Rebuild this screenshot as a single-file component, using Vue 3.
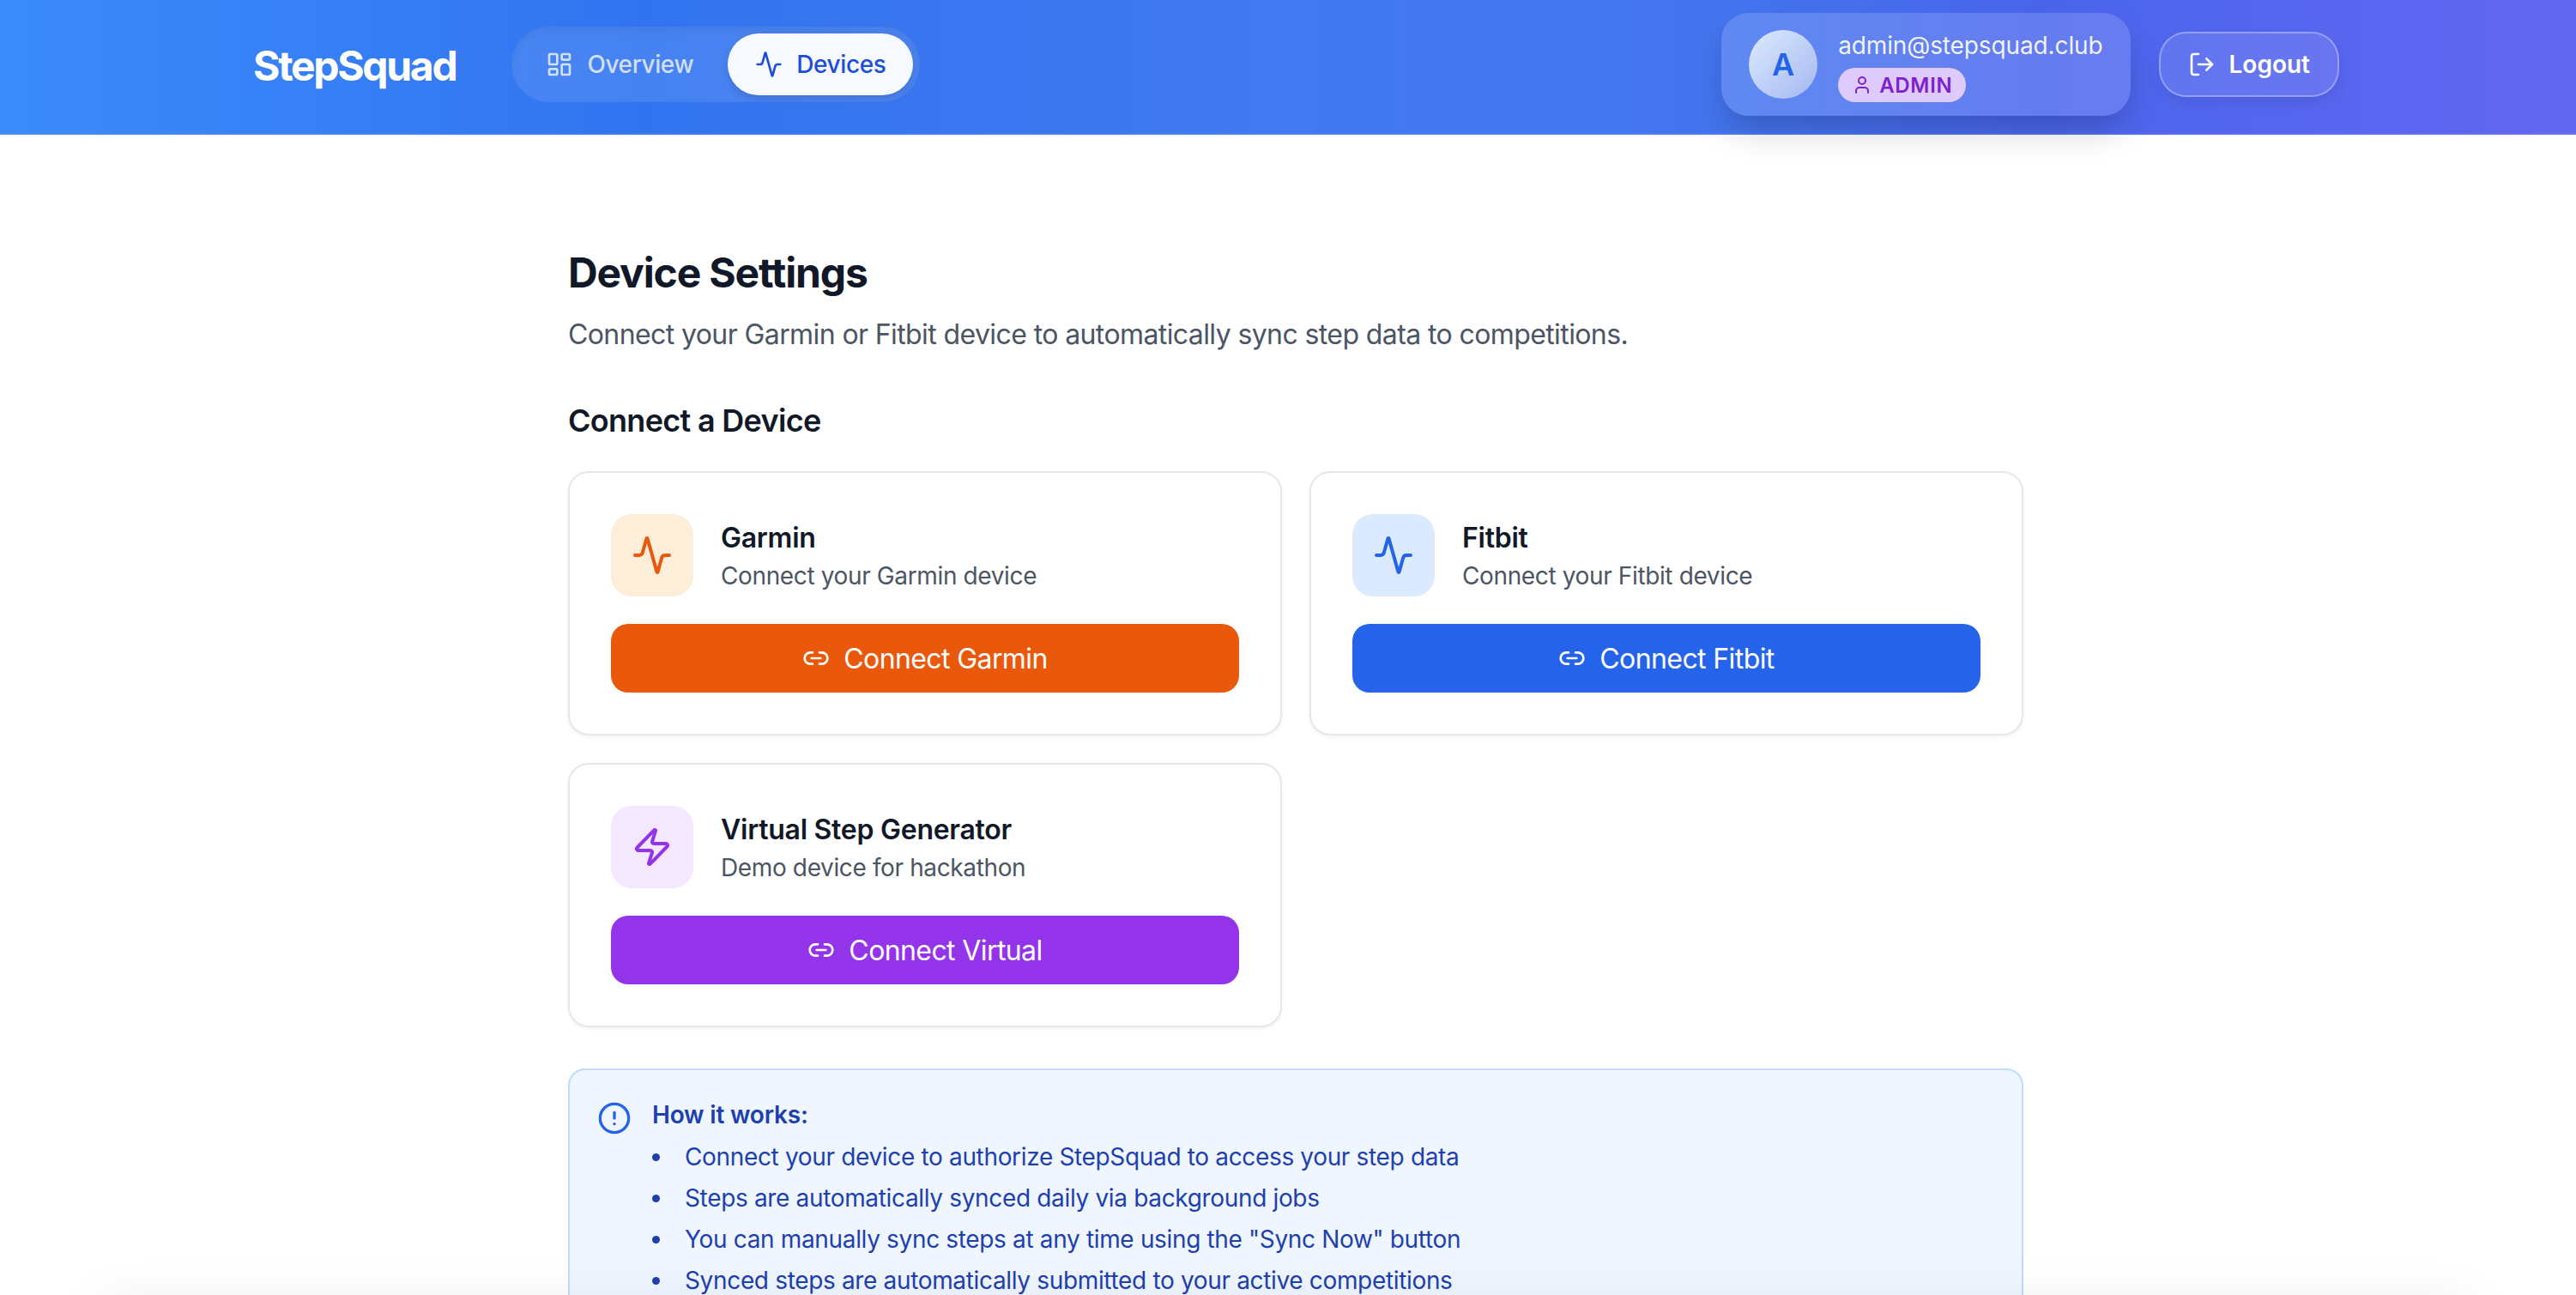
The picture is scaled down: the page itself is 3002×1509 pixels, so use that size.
<script setup>
const devices = [
  { key: 'garmin', name: 'Garmin', sub: 'Connect your Garmin device', cta: 'Connect Garmin', icon: 'pulse' },
  { key: 'fitbit', name: 'Fitbit', sub: 'Connect your Fitbit device', cta: 'Connect Fitbit', icon: 'pulse' },
  { key: 'virtual', name: 'Virtual Step Generator', sub: 'Demo device for hackathon', cta: 'Connect Virtual', icon: 'zap' }
]
const tips = [
  'Connect your device to authorize StepSquad to access your step data',
  'Steps are automatically synced daily via background jobs',
  'You can manually sync steps at any time using the "Sync Now" button',
  'Synced steps are automatically submitted to your active competitions'
]
const pulse = 'M22 12h-2.48a2 2 0 0 0-1.93 1.46l-2.35 8.36a.25.25 0 0 1-.48 0L9.24 2.18a.25.25 0 0 0-.48 0l-2.35 8.36A2 2 0 0 1 4.49 12H2'
const zap = 'M4 14a1 1 0 0 1-.78-1.63l9.9-10.2a.5.5 0 0 1 .86.46l-1.92 6.02A1 1 0 0 0 13 10h7a1 1 0 0 1 .78 1.63l-9.9 10.2a.5.5 0 0 1-.86-.46l1.92-6.02A1 1 0 0 0 11 14z'
</script>

<template>
  <div class="page">
    <header class="topbar">
      <div class="left">
        <div class="logo">StepSquad</div>
        <nav class="nav">
          <a class="nav-item">
            <svg class="ic32" viewBox="0 0 24 24"><rect x="3" y="3" width="7" height="9" rx="1" /><rect x="14" y="3" width="7" height="5" rx="1" /><rect x="14" y="12" width="7" height="9" rx="1" /><rect x="3" y="16" width="7" height="5" rx="1" /></svg>
            <span>Overview</span>
          </a>
          <a class="nav-item active">
            <svg class="ic32" viewBox="0 0 24 24"><path :d="pulse" /></svg>
            <span>Devices</span>
          </a>
        </nav>
      </div>
      <div class="right">
        <div class="user">
          <div class="avatar">A</div>
          <div class="user-info">
            <div class="email">admin@stepsquad.club</div>
            <div class="badge">
              <svg class="ic24" viewBox="0 0 24 24"><path d="M19 21v-2a4 4 0 0 0-4-4H9a4 4 0 0 0-4 4v2" /><circle cx="12" cy="7" r="4" /></svg>
              <span>ADMIN</span>
            </div>
          </div>
        </div>
        <button class="logout">
          <svg class="ic32" viewBox="0 0 24 24"><path d="M9 21H5a2 2 0 0 1-2-2V5a2 2 0 0 1 2-2h4" /><polyline points="16 17 21 12 16 7" /><line x1="21" y1="12" x2="9" y2="12" /></svg>
          <span>Logout</span>
        </button>
      </div>
    </header>

    <main class="main">
      <h1>Device Settings</h1>
      <p class="lead">Connect your Garmin or Fitbit device to automatically sync step data to competitions.</p>
      <h2>Connect a Device</h2>
      <div class="grid">
        <section v-for="d in devices" :key="d.key" class="card" :class="d.key">
          <div class="card-head">
            <div class="tile">
              <svg class="ic48" viewBox="0 0 24 24"><path :d="d.icon === 'zap' ? zap : pulse" /></svg>
            </div>
            <div>
              <h3>{{ d.name }}</h3>
              <p class="sub">{{ d.sub }}</p>
            </div>
          </div>
          <button class="connect">
            <svg class="ic32" viewBox="0 0 24 24"><path d="M9 17H7A5 5 0 0 1 7 7h2" /><path d="M15 7h2a5 5 0 1 1 0 10h-2" /><line x1="8" y1="12" x2="16" y2="12" /></svg>
            <span>{{ d.cta }}</span>
          </button>
        </section>
      </div>
      <aside class="info">
        <svg class="ic40" viewBox="0 0 24 24"><circle cx="12" cy="12" r="10" /><line x1="12" y1="8" x2="12" y2="12" /><line x1="12" y1="16" x2="12.01" y2="16" /></svg>
        <div>
          <h4>How it works:</h4>
          <ul>
            <li v-for="t in tips" :key="t">{{ t }}</li>
          </ul>
        </div>
      </aside>
    </main>
    <div class="edge-shadow"></div>
  </div>
</template>

<style>
html, body { margin: 0; background: #fff; overflow: hidden; height: 100%; }
</style>

<style scoped>
.page {
  position: relative;
  width: 3002px;
  height: 1509px;
  overflow: hidden;
  font-family: Inter, "Noto Sans", sans-serif;
  background: #fff;
}
svg { fill: none; stroke: currentColor; stroke-width: 2; stroke-linecap: round; stroke-linejoin: round; flex: none; display: block; }
.ic24 { width: 24px; height: 24px; }
.ic32 { width: 32px; height: 32px; }
.ic40 { width: 40px; height: 40px; }
.ic48 { width: 48px; height: 48px; }

.topbar {
  position: relative;
  z-index: 2;
  box-sizing: border-box;
  height: 157px;
  padding: 15px 276px 20px 295px;
  display: flex;
  align-items: center;
  justify-content: space-between;
  background: linear-gradient(90deg, #3b8bfb 0%, #3274f0 25%, #4179f0 50%, #4474ef 68%, #4a66ee 79%, #6366f1 100%);
  border-bottom: 2px solid rgba(255, 255, 255, 0.06);
}
.left, .right { display: flex; align-items: center; }
.left { gap: 65px; }
.right { gap: 33px; }
.logo { color: #fff; font-size: 48px; font-weight: 700; letter-spacing: -2.3px; line-height: 64px; margin-top: 3px; }
.nav {
  display: flex;
  gap: 8px;
  padding: 8px;
  border-radius: 44px;
  background: rgba(255, 255, 255, 0.1);
  box-shadow: inset 0 4px 8px rgba(0, 0, 0, 0.06);
}
.nav-item {
  display: flex;
  align-items: center;
  gap: 16px;
  height: 72px;
  padding: 0 32px;
  border-radius: 36px;
  font-size: 28px;
  font-weight: 500;
  letter-spacing: -0.4px;
  color: rgba(255, 255, 255, 0.75);
}
.nav-item.active { background: #f6f9ff; color: #1d4ed8; box-shadow: 0 4px 10px rgba(0, 0, 0, 0.12); }

.user {
  display: flex;
  align-items: center;
  gap: 24px;
  box-sizing: border-box;
  height: 120px;
  padding: 0 32px;
  border-radius: 32px;
  background: rgba(255, 255, 255, 0.15);
  box-shadow: 0 20px 40px -6px rgba(0, 0, 0, 0.22);
}
.avatar {
  width: 80px;
  height: 80px;
  border-radius: 50%;
  display: flex;
  align-items: center;
  justify-content: center;
  background: linear-gradient(135deg, #dbeafe, #a5b8f0);
  color: #2563eb;
  font-size: 36px;
  font-weight: 600;
}
.user-info { display: flex; flex-direction: column; align-items: flex-start; gap: 4px; }
.email { color: rgba(255, 255, 255, 0.92); font-size: 28px; line-height: 44px; font-weight: 400; letter-spacing: -0.12px; }
.badge {
  display: flex;
  align-items: center;
  gap: 8px;
  height: 40px;
  padding: 0 16px;
  border-radius: 20px;
  background: #dfcbfb;
  color: #7e22ce;
  font-size: 24px;
  font-weight: 600;
  letter-spacing: 0.7px;
}
.logout {
  display: flex;
  align-items: center;
  gap: 16px;
  box-sizing: border-box;
  height: 76px;
  padding: 0 32px;
  border-radius: 32px;
  border: 2px solid rgba(255, 255, 255, 0.3);
  background: rgba(255, 255, 255, 0.1);
  box-shadow: 0 8px 16px rgba(0, 0, 0, 0.08);
  color: #fff;
  font-family: inherit;
  font-size: 28px;
  font-weight: 600;
}

.main { width: 1696px; margin-left: 662px; padding-top: 129px; }
h1 { margin: 0 0 16px; font-size: 48px; line-height: 64px; font-weight: 700; letter-spacing: -1.15px; color: #111827; }
.lead { margin: 0 0 48px; font-size: 32px; line-height: 48px; letter-spacing: -0.6px; color: #4b5563; }
h2 { margin: 0 0 31px; font-size: 36px; line-height: 56px; font-weight: 600; letter-spacing: -0.7px; color: #111827; }
.grid { display: grid; grid-template-columns: 1fr 1fr; gap: 32px; }
.card {
  box-sizing: border-box;
  height: 308px;
  padding: 48px;
  border: 2px solid #e5e7eb;
  border-radius: 24px;
  background: #fff;
  box-shadow: 0 2px 4px rgba(0, 0, 0, 0.05);
}
.card-head { display: flex; align-items: center; gap: 32px; margin-bottom: 32px; }
.tile { width: 96px; height: 96px; border-radius: 24px; display: flex; align-items: center; justify-content: center; }
h3 { margin: 0; font-size: 32px; line-height: 48px; font-weight: 600; letter-spacing: -0.26px; color: #111827; }
.sub { margin: 0; font-size: 28px; line-height: 40px; letter-spacing: -0.37px; color: #4b5563; }
.connect {
  width: 100%;
  height: 80px;
  display: flex;
  align-items: center;
  justify-content: center;
  gap: 16px;
  border: 0;
  border-radius: 20px;
  color: #fff;
  font-family: inherit;
  font-size: 32px;
  font-weight: 400;
  letter-spacing: -0.6px;
}
.garmin .tile { background: #fdeeda; color: #ea580c; }
.garmin .connect { background: #ea580c; }
.fitbit .tile { background: #dbeafe; color: #2563eb; }
.fitbit .connect { background: #2563eb; }
.virtual .tile { background: #f3e8ff; color: #9333ea; }
.virtual .connect { background: #9333ea; }

.info {
  display: flex;
  gap: 24px;
  margin-top: 48px;
  box-sizing: border-box;
  padding: 32px;
  border: 2px solid #bfdbfe;
  border-radius: 20px;
  background: #eff6ff;
  color: #1e40af;
}
.info .ic40 { color: #2563eb; margin-top: 4px; }
h4 { margin: 0 0 5px; font-size: 28px; line-height: 40px; font-weight: 600; letter-spacing: -0.2px; }
ul { margin: 0; padding: 0; list-style: disc inside; font-size: 28px; line-height: 48px; letter-spacing: -0.34px; }

.edge-shadow {
  position: absolute;
  left: 120px;
  right: 120px;
  top: 1525px;
  height: 100px;
  box-shadow: 0 0 70px rgba(0, 0, 0, 0.09);
  pointer-events: none;
}
</style>
